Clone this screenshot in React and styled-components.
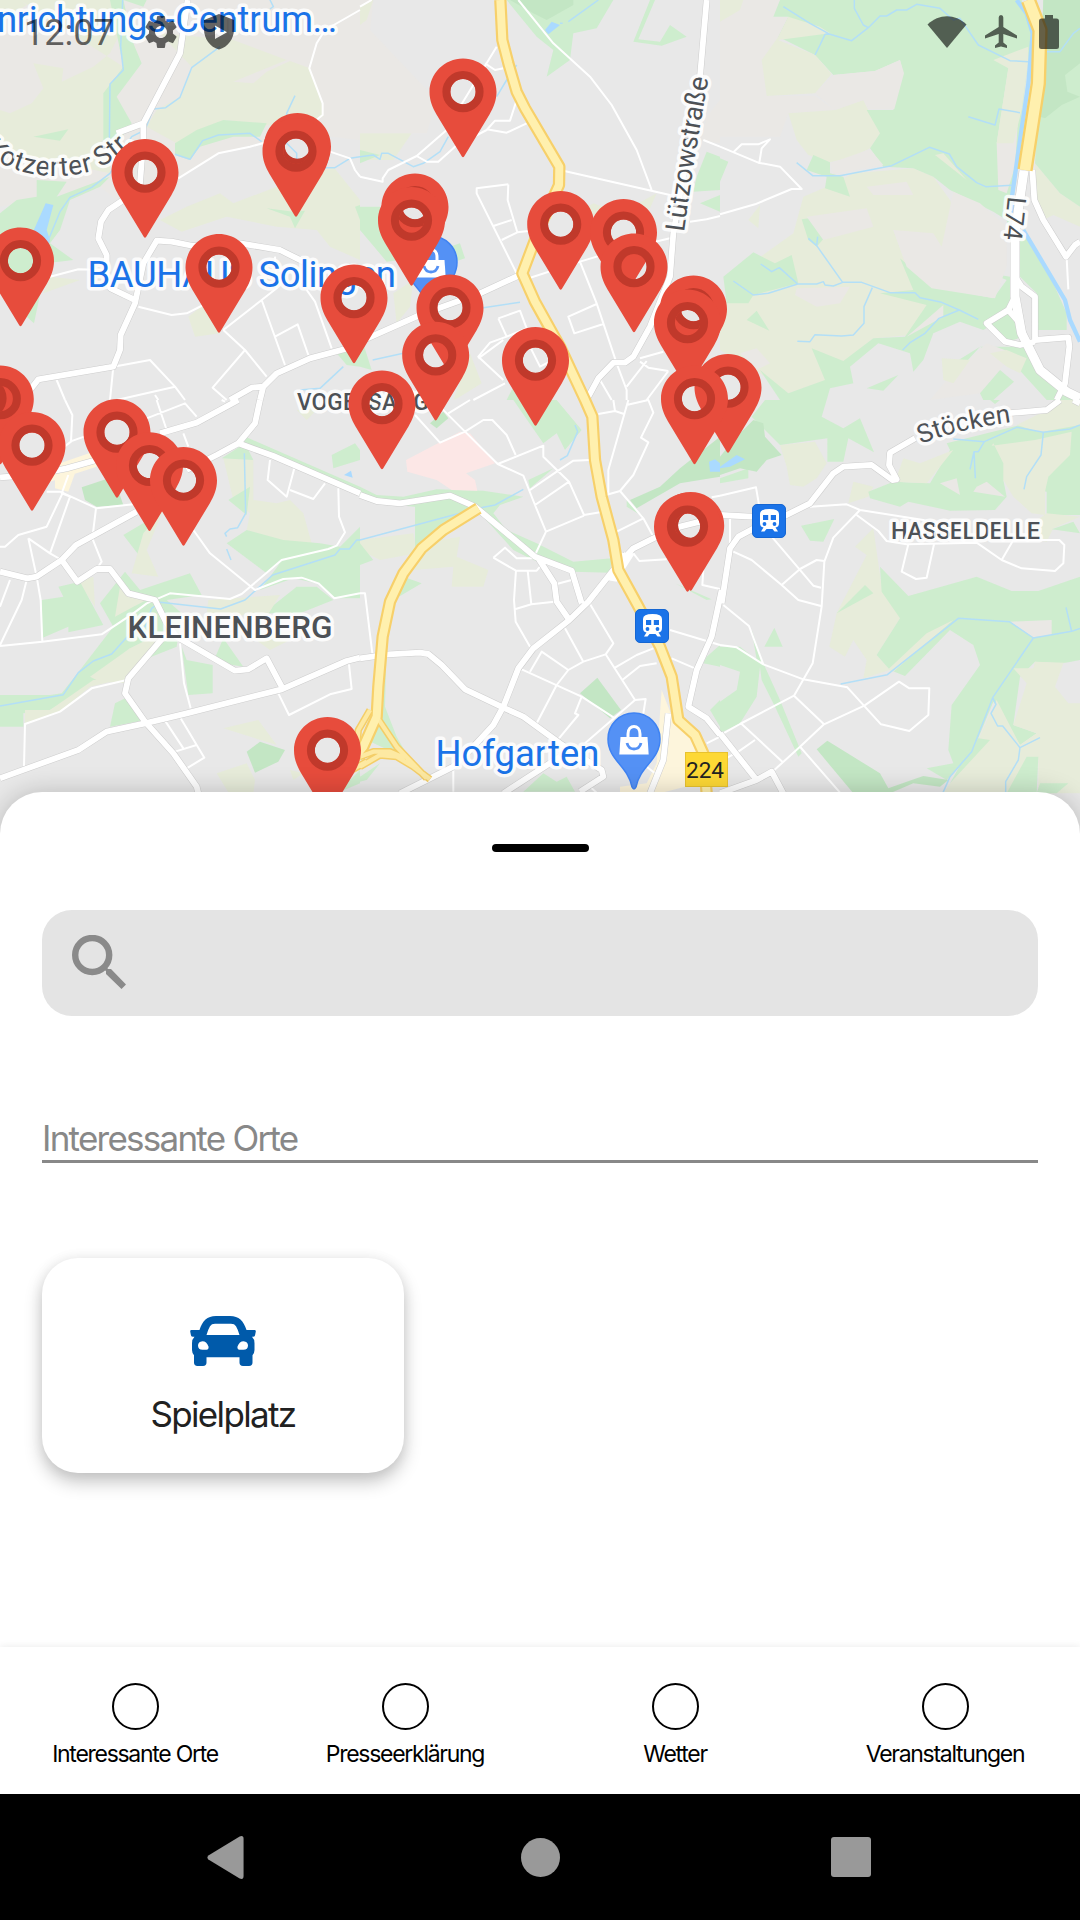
import React from "react";
import styled, { createGlobalStyle } from "styled-components";

const GlobalStyle = createGlobalStyle`
  body { margin: 0; background: #fff; }
  * { box-sizing: border-box; }
`;

const Screen = styled.main`
  width: 1080px;
  height: 1920px;
  display: flex;
  flex-direction: column;
  overflow: hidden;
  font-family: Inter, "Liberation Sans", sans-serif;
  background: #fff;
`;

const MapArea = styled.section`
  position: relative;
  flex: none;
  height: 836px;
  background: #e8e8e8;
`;

const MapCanvas = styled.svg`
  display: block;
`;

const StatusBar = styled.header`
  position: absolute;
  top: 0;
  left: 0;
  right: 0;
  height: 63px;
  padding: 0 21px 0 24px;
  display: flex;
  justify-content: space-between;
  align-items: center;
  color: rgba(0, 0, 0, 0.6);
  font: 400 36px/63px Roboto, sans-serif;
`;

const StatusGroup = styled.div`
  display: flex;
  align-items: center;
  gap: ${(p) => p.$gap}px;
`;

const Clock = styled.span`
  width: 92px;
  margin-right: 25px;
  padding-top: 4px;
`;

const Sheet = styled.section`
  position: relative;
  flex: none;
  margin-top: -44px;
  height: 855px;
  padding: 52px 42px 0;
  display: flex;
  flex-direction: column;
  background: #fff;
  border-radius: 42px 42px 0 0;
  box-shadow: 0 0 26px rgba(0, 0, 0, 0.2);
`;

const Handle = styled.div`
  flex: none;
  align-self: center;
  width: 97px;
  height: 8px;
  border-radius: 4px;
  background: #000;
`;

const SearchField = styled.div`
  flex: none;
  margin-top: 58px;
  height: 106px;
  padding: 25px 30px;
  display: flex;
  align-items: flex-start;
  border-radius: 30px;
  background: #e4e4e4;
`;

const SectionTitle = styled.h2`
  flex: none;
  margin: 98px 0 0;
  height: 49px;
  border-bottom: 3px solid #888;
  color: #888;
  font-size: 35px;
  font-weight: 400;
  line-height: 48px;
  letter-spacing: -1.75px;
`;

const Card = styled.article`
  flex: none;
  margin-top: 95px;
  width: 362px;
  height: 215px;
  padding-top: 58px;
  display: flex;
  flex-direction: column;
  align-items: center;
  gap: 26px;
  border-radius: 36px;
  background: #fff;
  box-shadow: 0 9px 18px rgba(0, 0, 0, 0.23), 0 0 14px rgba(0, 0, 0, 0.06);
`;

const CardLabel = styled.span`
  color: #212121;
  font-size: 35px;
  line-height: 44px;
  letter-spacing: -1.65px;
`;

const TabBar = styled.nav`
  position: relative;
  flex: none;
  height: 147px;
  display: grid;
  grid-template-columns: repeat(4, 1fr);
  background: #fff;
  box-shadow: 0 -1px 7px rgba(0, 0, 0, 0.07);
`;

const Tab = styled.div`
  padding-top: 36px;
  display: flex;
  flex-direction: column;
  align-items: center;
  gap: 9px;
`;

const TabCircle = styled.span`
  width: 47px;
  height: 47px;
  border: 2.6px solid #000;
  border-radius: 50%;
`;

const TabLabel = styled.span`
  color: #000;
  font-size: 23px;
  line-height: 30px;
  letter-spacing: -1.28px;
  white-space: nowrap;
`;

const SystemBar = styled.footer`
  flex: 1;
  padding: 0 209px 0 207px;
  display: flex;
  justify-content: space-between;
  align-items: center;
  background: #000;
`;

const SystemShape = styled.svg`
  display: block;
  fill: #999;
  margin-left: ${(p) => p.$nudge || 0}px;
`;

/* Each sector covers 360x400 px and is drawn in a 1080x1200 grid. */
const sectors = [
  {
    x: 0,
    y: 0,
    beige: "M0 0H1080V420L900 400L655 460L535 535L400 640L300 560L0 620Z",
    farm: "M0 0H60L80 15L0 65Z M60 0H360L355 110L330 160L280 200L185 245L190 205L100 190L130 265L95 310L30 340L0 330V450L330 520L330 250L370 200Z M480 100L700 120L860 180L700 245L760 250L800 215L870 183L930 205L965 310L970 350L840 380L680 360L530 430L440 380L470 330L540 290L575 200Z M545 695L480 660L560 620L660 580L700 610L830 560L1000 500L1080 600V780L990 740L950 690L830 680L680 650Z M565 950L610 915L660 1000L585 1010Z M150 830L240 840L130 880Z",
    green: "M330 0H440L430 20L370 0L400 130L425 190L350 290L395 370L345 440L310 420V280L340 240L370 200Z M100 410L205 388L180 422Z M525 430L590 390L670 360L800 370L780 410L700 410L600 440L570 480L525 465Z M0 640L50 600L110 590L110 540L200 545L170 590L330 530L300 560L210 600L180 690L150 730L220 780L140 790L102 970L0 880Z M800 625L880 635L915 632L885 685L870 650Z M1065 620L1080 615V660Z M1010 1060L1080 1030V1100L1040 1095Z",
    water: "M137 610L160 615L140 690L150 720L120 830L95 750L75 750Z",
    streams: "M368 0L362 140L370 210L330 252L328 430M810 0L820 20L810 27M660 140L575 203L540 292L497 323L460 327L435 390L395 410L330 520L275 562L210 592L180 635L145 720M525 463L570 478L608 422L655 405L750 400L785 425M885 287L860 340V430L890 460V475L970 503H1005L1050 475L1080 470M1030 1100L960 1165L900 1170",
    minor: "M1080 30L975 90L950 130L928 205L968 310V345L900 400L750 440L655 460L535 535M990 455L1050 475L1065 510L1080 530M150 830L235 808L320 810M415 920L515 945L560 940L610 915M670 990L785 900L830 865L825 770M785 900L855 1095M920 870L945 905L995 1045M670 990L735 1050L800 1130M825 1010L893 973L925 1065M735 1050L638 1163L680 1200M340 1100L450 1080L525 1160L350 1200M340 1100L330 1200M465 1185L475 1200M525 1160L555 1200M170 1140L195 1200",
    mid: "M563 0L540 160L430 370L350 400M430 370V420L420 550L370 600L325 630L303 665L295 715L320 765V840L332 865L405 900M910 785L840 750L720 730L580 738L515 725L470 722L430 790L405 910L362 1005L360 1050L340 1100L115 1138L90 1170M1080 1035L930 1075L830 1120L790 1160L755 1163L690 1200M790 1160L780 1200",
  },
  {
    x: 360,
    y: 0,
    beige: "M0 0H40L30 90L230 300L200 400H0Z M1040 350L1080 300V430L1020 420Z",
    farm: "M0 20L40 0L20 60L0 75Z M0 400L155 400L100 480L0 480Z M780 640L890 580L870 625L820 660L650 640L700 610Z M100 880L160 840L150 920L110 970Z M280 1200L330 1060L365 1150L300 1190Z",
    green: "M440 0H760L710 85L640 100L630 180L560 230L580 150L530 110Z M870 0L820 125L905 137L980 110L930 75L900 125L835 118L885 0Z M1010 530L1040 455L1080 470V570L1000 575Z M1020 610L1080 585V635Z M0 450L60 465L0 490Z M0 620L60 620L120 780L80 785L0 690Z M240 750L300 730L315 775L240 800Z M0 1000L35 1110L0 1100Z M440 1200L460 1160L520 1200Z",
    dark: "M450 0H640V15L560 60L520 40Z",
    water: "M555 90L575 65L600 75L565 103Z",
    streams: "M0 470L40 465L60 478L65 460H85L160 500L190 490L240 455L265 410M470 195L440 240L410 290M600 70H608M625 65L715 0M370 923L480 907M38 1080L130 1060",
    minor: "M0 20L35 0M475 0L580 130L690 230L755 315L830 450L875 570M600 510L930 585M375 190L405 210L430 205M0 530L68 545V535L85 510L170 468L260 390L300 320L410 140M170 468L200 485H235L285 440L380 390L405 362H450L470 300M380 388L440 398L500 370M445 553L443 600L472 697L505 693M445 553L350 565V580L470 820M400 678L455 660M425 720L472 697M490 840L660 785L760 755L930 715M660 785L710 910L730 970L770 1090L800 1170V1200M730 972L643 1000L625 950L710 912M415 955L480 932L500 985L440 1010L390 1028L355 1070L430 1140M415 955L440 1010M355 1075L430 1020M510 1040L540 1100L580 1080M435 1150L340 1200M990 665L1040 658L1080 648M1030 420L1080 440M840 1075L910 1055M840 1085L865 1103L925 1113M860 1083L800 1160M925 1113L860 1200M720 1140L755 1200",
    mid: "M1040 0L1020 230L940 700L930 830L870 980L820 1070L795 1088H760L715 1135L685 1190M0 1025L180 945L360 880L480 825",
  },
  {
    x: 720,
    y: 0,
    beige: "M0 0H180L160 50L205 50L175 110L125 180L140 288H285L345 330L205 340L180 410H0Z",
    farm: "M205 340L345 330L430 300L480 400L450 445L400 470L330 487L265 465L230 420Z M320 560L400 520L580 505L640 530L690 600L715 660L665 740L600 720L520 690L560 800L640 870L820 895L620 960L570 1005L460 1015L370 1085L280 1050L320 1140L205 1180L120 1120L0 1050V900L85 910L80 800L220 700L250 590Z M945 490L1020 580L1080 620V680L1000 645L970 660L945 590Z M120 615L115 685L85 660Z M0 0H70L60 30L0 65Z",
    green: "M180 0H905L935 100L925 180L905 340L890 500L875 560L870 700L860 660L820 635L690 570L640 530L580 505L490 500L450 445L480 400L440 330H520L550 220L540 180L465 213L340 225L285 165L175 110L205 50L160 50Z M0 475L25 485L0 545Z M280 465L330 487V520L370 530L390 590L315 565L320 530L260 510Z M245 658L315 648L325 700L290 740L265 720Z M10 830L100 757L165 790L215 765L235 850L100 885L85 910L20 910Z M80 960L110 932L148 992Z M540 775L640 860L820 895L860 840L810 820L870 830L880 900L840 960L790 990L720 965L640 1000L610 1080L580 1115L570 1060L475 1030L390 1100L400 1150L330 1165L320 1200H180L120 1110L205 1180L315 1140L275 1045L370 1083L460 1015L555 1010L620 915L480 880L580 870Z M880 730L910 690L1000 850L1040 940V990L950 990L950 880L900 830Z M800 970L870 900L910 1010L850 1030Z M680 1150L780 1040L920 1040L960 1130L1080 1200H980L880 1090L780 1040L700 1090Z M970 0H1080V620L1020 580L945 490Z",
    overBeige: "M340 225L465 213L540 180L552 220L523 327H445L430 300L345 330L285 280Z M330 490L450 448L490 495L340 522Z M440 560L560 545L580 585H460Z M520 690L640 700L665 740L700 575L780 610L860 680V800L825 895L635 865L560 800Z M260 650L440 625L460 680L310 720Z M230 865L390 860L360 910L290 920L225 885Z M865 205L905 190L885 500L860 580L835 570L830 430Z M630 1200L680 1140L800 1030L880 1060L780 1180Z M60 1060L110 1045L150 1090L110 1110Z M670 915V950L560 1010Z",
    overFarm: "M205 50L300 80L330 100L175 120L285 165L335 222L285 280L140 288L125 180L175 110Z M820 180L925 140V180L905 330L880 430L830 430L865 205Z M645 465L670 460L740 540Z M665 1075L750 1080L700 1150L670 1140Z M810 1060L860 1050L920 1075L900 1120L860 1100Z",
    overGreen: "M780 1180L840 1110L882 1145L820 1200H790Z M440 1165L535 1125L490 1172Z",
    dark: "M970 0H1080V190L1035 225L1042 275L1080 290L1025 315L975 355L960 350Z",
    river: "M890 0L920 40L938 100L925 250L900 420L876 590M880 600V640M910 690L1035 900L1050 960L1080 1025",
    streams: "M190 20L270 70L330 103L395 122L445 83L480 48H500L530 30H560L590 13L660 25L700 60L720 55L775 135L870 182L925 185M403 0V25L430 75L445 83M330 103H315L300 135L285 165M745 350L825 375L837 327L900 338M230 488L278 527H360L515 497L628 442L688 462L710 500L770 548L797 560L875 556M265 715L290 737L368 847L340 858L315 855L310 845L290 852H233L178 803L155 815L122 792M290 737L293 710M40 843L100 885L145 880L233 852M368 847H425L510 878H585L600 893L665 907L718 930L775 958M718 930L657 955L615 1000L570 1028L548 1050M457 863L432 920V970L400 1005L365 1008L285 1004L270 1025L232 1024M1080 85L1060 100L1020 155H980",
    minor: "M0 440L115 488L180 500L245 567H215L105 613L0 643M40 457L65 433H115L150 418L125 445L118 488M1040 775L1045 868",
    mid: "M937 510L943 600L970 660L1038 770L1065 735L1080 725M885 830L905 860L945 890V1020L1045 1012L1048 1040L1035 1150L1010 1200M885 890L865 930L800 970L855 1025L900 1035L945 1025M865 930L900 970L915 1020",
    wide: "M912 512L885 700V890L905 1000L960 1110L1040 1175L1080 1195",
  },
  {
    x: 0,
    y: 400,
    farm: "M235 545L280 530L285 620Z M670 175L760 180V300L830 310L870 300L910 340L935 430L850 425L740 390L750 340L700 300Z M670 985L775 960L830 1035Z M650 1120L740 1090L765 1140L760 1180L690 1185Z M870 1110L910 1120L880 1140Z M740 700L930 690L810 750Z M890 30L960 20L920 60Z",
    green: "M0 885L150 885L185 880L240 810L340 680L300 610L375 515L420 570L570 520L605 585L500 600L545 640L530 740L430 780L390 745L300 840L150 930L70 940V980L0 980Z M125 600L190 590L175 560L240 545L310 675L205 697V680L125 715Z M370 405L455 355L420 470Z M690 300L740 390L850 420L960 430L1020 440L1080 380V595L1000 595L950 550L880 535L780 570L840 490L800 520L680 430L740 390Z M685 300L750 260L740 345Z M720 130L740 112L1080 260V285L830 165Z M665 175L735 130L760 180Z M995 165L1065 130L1080 150V180L1000 205Z M790 640L890 560L950 560L1000 600L900 640Z M560 780L638 795V880L565 885L545 740Z M670 715L730 800L640 785Z M345 910L385 890L440 960L330 980Z M1010 1180L1080 1150V1110Z",
    overFarm: "M270 830L390 745L500 690L440 780L380 850L300 845Z M345 650L360 560L440 600L400 620Z M75 930L150 930L280 840L375 835L270 860L180 935L75 970Z M625 600L840 585L800 650L620 640Z M430 400L490 330L440 450L475 530L395 520Z",
    dark: "M245 262L340 230L370 315L290 320L255 300Z M740 1055L780 1025L855 1050L835 1085L765 1118Z",
    commerce: "M165 235L225 220L205 275L165 265Z M150 200L280 155L290 200L150 245Z",
    water: "M1032 225L1053 212L1058 233Z",
    streams: "M733 160L737 340L713 383L690 387L675 400L680 410M680 447L693 480M1080 420H1070L1048 447H1020L1005 465L818 525L735 600L662 627L480 607L455 625L435 680L400 690L335 762L280 783L235 818L190 884L0 918",
    minor: "M195 0L217 45L213 125L180 150M210 125L280 100M140 275H180L290 325L400 313M288 325L277 415L305 485L290 507M190 275L140 380L55 405L15 440H0M205 225L185 280L210 290L150 460L185 480M85 415L150 460M85 415L110 530L122 600L127 725M0 738L127 725L305 703L400 640L440 610L510 580L690 597L725 582L845 480L985 447L1010 437L1035 397L1017 350L1015 265M580 390L630 460L765 570L850 537L905 533L955 550L1003 595L1080 580M470 0L500 90M440 55L555 10L590 50M550 100L565 140M810 180L803 240L860 290L883 205M870 270L940 297L975 250M30 540L0 620M80 540L65 600L0 735M380 840L275 865L180 935L75 972L72 1100M540 730L552 850L572 925M835 880L867 945L990 883L1055 867L1047 793M497 965L550 1045M542 955L613 1073L560 1105M525 1055L590 1035M665 0L675 5",
    mid: "M0 232L100 225L200 205L290 180M480 100L590 68L715 0M780 0L765 70L715 130L650 165L560 210M410 335L228 435L185 480L110 530L82 535L0 515M185 480L232 545L290 507H330L385 580L465 600L500 670L530 710L705 812L745 808L800 775L845 860M715 130L820 168L1080 280M500 700L385 835L375 880L435 965L520 1060L590 1160L595 1180M0 1135L235 1050L320 995L435 970L560 940L845 868L1040 783L1080 773",
  },
  {
    x: 360,
    y: 400,
    farm: "M0 420L160 400L170 460L60 480L0 450Z M180 430L300 410L290 470L385 510L370 560L275 560L280 500L160 510Z",
    green: "M0 260L50 285L130 290L230 268L370 272L490 290L420 315L400 340L440 390L530 430L640 485L755 475L750 518L640 515L520 480L460 450L360 340L310 370L220 430L165 440L165 320L50 310L0 290Z M0 430L40 480L0 495Z M60 760L100 600L130 530L185 550L100 600L80 720L75 920L110 1010L150 1080L20 1020L50 950Z M460 0H590L665 90L615 150L590 100L550 130Z M505 240L580 205L510 265Z M490 1175L550 1120L590 1145L620 1130L645 1175Z M1040 770L1080 735V800L1030 790Z M1050 930L1080 900V980Z M0 1130L60 1090L20 1140L0 1145Z M945 550L1055 598L1040 600Z M800 300L850 350L800 320Z",
    dark: "M210 70L250 35L265 55L230 85Z M810 300L900 260L960 205L1080 110V230L960 250L830 325Z M660 880L712 833L783 930L750 955Z",
    pink: "M138 180L300 95L330 100L405 190L318 220L345 240L352 272L275 270L230 240L142 215Z",
    commerce: "M905 870L940 960L1000 1010L1010 1060H975V1160L900 1180H780V1160L860 1150L890 1090L900 940Z",
    water: "M1047 185L1065 178L1080 190V215H1050Z",
    streams: "M645 75L653 95L622 167L600 180M490 268L405 315L370 322L280 345L0 420",
    minor: "M165 45L240 128L315 95L370 60H397L440 105L467 165M413 192L550 137V170L627 245L672 345L720 337M240 20L315 95L413 192L490 227L525 315L558 395L525 465M510 270L590 215L640 182L690 180M525 315L627 245M558 395L672 347M265 40L330 0M715 42L765 33L792 42M805 0L745 210V285M760 0L765 33M720 290L780 273L820 225L865 127L843 113L880 38L865 0L800 15M780 273L850 355L880 410M850 355L770 395M820 460L838 483L920 478M400 473L435 443L470 475H530M400 473L468 512H530L540 500M468 510L462 600L467 665L510 740M503 512L514 613L583 605M467 627L514 613M590 552L635 540M690 612L760 730L737 763L670 785L615 685M670 785L625 810L545 755L510 815M485 808L665 890L765 955M625 810L590 855L530 970M665 890L645 940L655 945L597 1015M737 763L825 900L675 1030M765 803L830 765L880 745M787 840L840 798L890 790M825 900L857 897L850 940M930 690L1080 735M935 775L1005 805M1030 510L1027 555L1080 567M1055 292L1080 287M0 580H15L37 760M280 1110V1175M690 1160L710 1178M860 1100L885 1120M1040 1030L1080 1010",
    mid: "M0 285L50 303L120 310L270 287L345 320L525 470L635 512L665 610M535 475L583 550L590 605L628 660M1080 350L960 380L880 415L820 445L760 510L685 605L628 660L520 745L475 805L430 920L400 975L340 1040L280 1100L120 1180M0 775L85 763L180 758L205 762L245 795L315 868L430 923L490 950L600 1030L725 1110L730 1130L660 1175M430 1180L600 1070M1085 570L1055 710L1010 810L985 920L1040 955L1080 1005M925 940L910 1080L870 1180M800 460L760 530",
  },
  {
    x: 720,
    y: 400,
    farm: "M180 135L285 125L320 190L290 235L250 260L210 255L200 200Z M400 245L460 260L445 290L385 310Z M405 440L460 385L485 560L540 655L470 765L510 810L430 835L440 780L400 720L375 770L328 740L350 640L440 465Z",
    green: "M95 50L135 0H320L305 50L370 85L420 55L462 157L385 115L370 185H322V115L180 135Z M0 235L85 205V235L0 250Z M445 275L520 245L630 250L690 150L680 130L900 75L1080 30V345H980L980 275L850 240L860 290L825 330L690 332L565 305L540 320L450 295Z M243 377L343 357L310 425L270 422Z M480 500L565 588L770 530L875 573H955L1080 530V790L1020 790L945 785L900 830L880 975L950 1000L900 1035L820 905L760 1050L680 1140L620 1105L700 1090L685 1050L695 915L780 795L760 735L690 690L555 828L510 810L470 765L540 655L485 575Z M0 740L60 740L110 780L95 690L130 790L180 900L245 1060L235 1070L165 920L125 840L120 800L110 890L60 970L0 1000Z M163 683L188 740H133Z M385 605L435 555L460 580L350 640Z M810 0L825 12L840 0Z",
    overFarm: "M550 175L600 190L700 150L620 250L525 245Z M890 75L1000 20L1020 0H1080V75L960 97Z M815 137L945 120L1055 95L1050 165L985 230L975 275V345L935 340L880 290L850 240L850 190L820 130Z M940 370L980 340L1080 350L1000 385L980 425L930 415Z M880 805H940L945 785L1080 790V1180H955V1075L920 1070L880 1180H670L760 1050L830 900L900 1035L950 1000L880 975L920 850Z M505 808L620 700L700 660L520 815Z",
    overBeige: "M660 250L710 235L720 285Z M770 260L800 245L855 290L760 275Z M870 665L995 660V705L940 712Z M1025 940L1080 970V1060Z",
    overUrban: "M1080 780V910L1045 910L1005 860L1030 790Z M0 795L60 815L50 870L0 905Z",
    overGreen: "M860 1180L920 1070H955L950 1180Z M960 1150H1045L1010 1180H950Z M740 1060L775 1015L810 1020L690 1150Z M995 388L1060 365L1080 400Z",
    dark: "M0 170L40 120L100 60L130 70L135 110L185 165L140 180L110 215L60 205L0 225Z M290 1048L322 1022L480 1120L505 1165L575 1140L610 1128L685 1140L660 1160L580 1150L510 1180H400Z",
    water: "M0 200L50 165L75 178L30 200L0 205Z",
    streams: "M700 117L793 125L890 82L970 97L1050 87L1080 75M970 97L963 165L920 230L912 268M793 125L775 155H762L750 208M762 155L766 235M362 852L502 824L715 655L868 665L940 714L1055 694L1038 622M1055 694L1080 685M940 714L818 893L755 1055L690 1130L668 1180M818 893L828 913L813 940L833 978H848L900 1043L895 1080L857 1145V1180M900 1043L960 1013",
    minor: "M0 287L108 262L118 320M30 350V430M270 320L380 313L420 330L610 360L700 400M420 330L340 413L313 485L305 620L278 790L222 887L60 972L10 1000M410 345L475 393L500 423L560 433L770 428L845 480L905 505L1005 513L1030 490L1033 435L1018 420H880L845 480M565 433L545 515L588 537L620 533L642 433M155 410L280 557L303 563M40 455L95 480L185 555L235 600L303 618M185 555L240 507L290 480L313 483M10 615L87 678L130 793M0 735L50 742L130 793L250 838L382 862L483 973L568 993L625 945L628 865H568L537 845L433 917L312 973L222 887M312 973L240 1040L163 1110M65 972L187 1085M105 1020L55 1055L0 1085M240 1040L360 1178",
    mid: "M1020 0L980 30L860 40M585 115L510 158L507 195L530 238L517 240L455 195L370 200L340 220L270 310L190 350L95 350L0 345M130 370L55 410L30 445L5 610M1060 0L1080 10M0 1000L110 1140L155 1115L190 1180M110 1140L0 1180",
  },
];

const highways =
  "M1501 0L1507 120L1525 190L1550 275L1575 325L1678 500L1677 555L1620 680L1567 820L1605 905L1680 1040L1755 1200L1777 1250L1785 1380L1805 1490L1840 1620L1855 1710L1910 1810L1980 1940L2015 2030L2035 2160L2085 2205L2110 2260L2120 2380 M1435 1525L1330 1590L1265 1645L1210 1720L1170 1805L1148 1910L1135 2060L1130 2150L1090 2240L1040 2300";
const ramps =
  "M1130 2150L1190 2240L1280 2335 M1080 2300L1140 2265L1190 2270L1240 2300L1290 2338 M1080 2270L1120 2255H1170L1215 2275 M1110 2130L1075 2190L1070 2250 M1100 2285L1000 2340L960 2376 M1080 2260L1000 2330L950 2378";
const eastHighway = "M3085 0L3120 90L3115 250L3075 510";

const fills = [
  ["beige", "#eae8e5"],
  ["farm", "#e7ecda"],
  ["green", "#ceedce"],
  ["overBeige", "#eae8e5"],
  ["overFarm", "#e7ecda"],
  ["overUrban", "#e8e8e8"],
  ["overGreen", "#ceedce"],
  ["dark", "#c3e6c4"],
  ["pink", "#fce7e6"],
  ["commerce", "#fdf5dc"],
  ["water", "#aadaff"],
];

const strokes = [
  ["streams", "#b3dff7", 4.5],
  ["river", "#aadaff", 13],
  ["minor", "#fff", 6],
  ["mid", "#cdcdcd", 20.5],
  ["wide", "#cdcdcd", 30],
  ["mid", "#fff", 17.5],
  ["wide", "#fff", 27],
];

const pins = [
  [297.5, 113], [296, 118], [145, 139], [20.5, 227.5], [219, 234], [354, 264.5],
  [463, 58.5], [415, 173.5], [411.5, 187], [560.7, 191], [623.5, 199], [634, 233.5],
  [450, 274.5], [435.7, 321.7], [535.5, 327], [693.5, 275.5], [687.5, 289.5],
  [382, 370.5], [728, 354], [694.5, 365.5], [-14, 365], [0.3, 365.5], [32, 412],
  [117, 399], [149.5, 432.3], [183.5, 447], [327.5, 717], [690.7, 492], [687.5, 493],
];

const sectorTransform = (s) => `translate(${s.x} ${s.y}) scale(${1 / 3})`;

const Pin = ({ x, y }) => (
  <g transform={`translate(${x - 33.5} ${y})`}>
    <path
      fill="#e74c3c"
      fillRule="evenodd"
      d="M33.5 0C52 0 67 15 67 33.5C67 42 64 49 60 56L34.6 98Q33.5 99.5 32.4 98L7 56C3 49 0 42 0 33.5C0 15 15 0 33.5 0ZM33.5 20.5A12.7 12.7 0 1 0 33.5 45.9A12.7 12.7 0 1 0 33.5 20.5Z"
    />
    <circle cx="33.5" cy="33.2" r="16.6" fill="none" stroke="#c0392b" strokeWidth="8" />
  </g>
);

const ShopPin = ({ x, y }) => (
  <g transform={`translate(${x} ${y})`}>
    <path
      d="M0 -26C14.400 -26 26 -14.400 26 0C26 21 6 27 2 48Q0 52 -2 48C-6 27 -26 21 -26 0C-26 -14.400 -14.400 -26 0 -26Z"
      fill="#5491f5"
      stroke="#3f83f3"
      strokeWidth="1.5"
    />
    <path d="M-13.500 -2H13.500L14.700 15.500H-14.700Z" fill="#fff" />
    <path d="M-6 -1V-5C-6 -15 6 -15 6 -5V-1" fill="none" stroke="#fff" strokeWidth="3" />
    <path d="M-7 4C-5 12 5 12 7 4" fill="none" stroke="#5491f5" strokeWidth="2.800" />
  </g>
);

const Station = ({ x, y }) => (
  <g transform={`translate(${x} ${y})`}>
    <rect x="0.500" y="0.500" width="33" height="33" rx="4.500" fill="#1a73e8" stroke="#1566d2" />
    <path d="M8 10Q8 5 17.500 5Q27 5 27 10V19Q27 23 23.500 23.500L26 27.500H22.500L20.500 25H14.500L12.500 27.500H9L11.500 23.500Q8 23 8 19Z" fill="#fff" />
    <path d="M11 11H16.200V16H11ZM18.800 11H24V16H18.800Z" fill="#1a73e8" />
    <circle cx="12.500" cy="20" r="1.900" fill="#1a73e8" />
    <circle cx="22.500" cy="20" r="1.900" fill="#1a73e8" />
  </g>
);

const MapLabel = styled.text`
  font-family: Roboto, sans-serif;
  font-size: ${(p) => p.$size}px;
  font-weight: ${(p) => p.$weight || 400};
  fill: ${(p) => p.$color || "#4d5156"};
  stroke: rgba(255, 255, 255, 0.85);
  stroke-width: ${(p) => p.$halo ?? 7}px;
  stroke-linejoin: round;
  paint-order: stroke;
`;

function CityMap() {
  return (
    <MapCanvas width="1080" height="836" viewBox="0 0 1080 836">
      <defs>
        <path id="kotzerter" d="M-15 150Q-5 163 20 171Q55 181 92 171Q118 161 144 131" />
        <path id="stoecken" d="M921 444Q955 430 1012 422" />
        <path id="luetzow" d="M684 232Q694 158 709 76" />
      </defs>
      {fills.map(([layer, color]) =>
        sectors.map((s) =>
          s[layer] ? (
            <path key={layer + s.x + s.y} d={s[layer]} fill={color} transform={sectorTransform(s)} />
          ) : null
        )
      )}
      {strokes.map(([layer, color, width]) =>
        sectors.map((s) =>
          s[layer] ? (
            <path
              key={layer + width + s.x + s.y}
              d={s[layer]}
              fill="none"
              stroke={color}
              strokeWidth={width}
              strokeLinejoin="round"
              transform={sectorTransform(s)}
            />
          ) : null
        )
      )}
      <g transform={`scale(${1 / 3})`} fill="none" strokeLinejoin="round">
        <path d="M1858 1658L1905 1660L1850 1745L1820 1740Z" fill="#fff" />
        <path d={ramps} stroke="#f4ce68" strokeWidth="22" />
        <path d={highways} stroke="#f7d06a" strokeWidth="37" />
        <path d={eastHighway} stroke="#f7d06a" strokeWidth="46" />
        <path d={ramps} stroke="#fde9a2" strokeWidth="13" />
        <path d={highways} stroke="#fff0ae" strokeWidth="24" />
        <path d={eastHighway} stroke="#fff0ae" strokeWidth="32" />
      </g>

      <MapLabel $size={36.5} $color="#1a73e8" x="-3" y="32" textLength="340">nrichtungs-Centrum…</MapLabel>
      <MapLabel $size={36.5} $color="#1a73e8" x="87.500" y="287" textLength="308.500">BAUHAUS Solingen</MapLabel>
      <MapLabel $size={36.5} $color="#1a73e8" x="435.500" y="766" textLength="164">Hofgarten</MapLabel>
      <MapLabel $size={23} $weight={500} x="297" y="409.5" textLength="132">VOGELSANG</MapLabel>
      <MapLabel $size={31.5} $weight={500} x="127.500" y="637.500" textLength="205">KLEINENBERG</MapLabel>
      <MapLabel $size={23.5} $weight={500} x="891" y="538.500" textLength="149">HASSELDELLE</MapLabel>
      <MapLabel $size={27}>
        <textPath href="#kotzerter" textLength="165">Kotzerter Str.</textPath>
      </MapLabel>
      <MapLabel $size={26}>
        <textPath href="#stoecken">Stöcken</textPath>
      </MapLabel>
      <MapLabel $size={27}>
        <textPath href="#luetzow" textLength="156">Lützowstraße</textPath>
      </MapLabel>
      <MapLabel $size={26} transform="translate(1008 196) rotate(96)">L74</MapLabel>

      <ShopPin x={431} y={262} />
      <ShopPin x={634} y={739} />
      <Station x={635} y={609} />
      <Station x={752} y={504} />
      <rect x="685.500" y="752.500" width="42" height="34" fill="#fdd835" stroke="#e8c22f" />
      <MapLabel $size={22.5} $color="#222" $halo={0} x="686" y="778">224</MapLabel>
      {pins.map(([x, y]) => (
        <Pin key={`${x}-${y}`} x={x} y={y} />
      ))}
    </MapCanvas>
  );
}

const GearIcon = () => (
  <svg width="40" height="40" viewBox="0 0 24 24" fill="currentColor">
    <path d="M19.140 12.940c.04-.3.06-.61.06-.94 0-.32-.02-.64-.07-.94l2.030-1.580c.18-.14.23-.41.12-.61l-1.920-3.320c-.12-.22-.37-.29-.59-.22l-2.390.96c-.5-.38-1.030-.7-1.620-.94l-.36-2.540c-.04-.24-.24-.41-.48-.41h-3.840c-.24 0-.43.17-.47.41l-.36 2.540c-.59.24-1.130.57-1.620.94l-2.390-.96c-.22-.08-.47 0-.59.22L2.740 8.870c-.12.21-.08.47.12.61l2.030 1.580c-.05.3-.09.63-.09.94s.02.64.07.94l-2.030 1.580c-.18.14-.23.41-.12.61l1.920 3.320c.12.22.37.29.59.22l2.390-.96c.5.38 1.030.7 1.620.94l.36 2.540c.05.24.24.41.48.41h3.840c.24 0 .44-.17.47-.41l.36-2.540c.59-.24 1.130-.56 1.620-.94l2.390.96c.22.08.47 0 .59-.22l1.920-3.320c.12-.22.07-.47-.12-.61l-2.010-1.580zM12 15.600c-1.980 0-3.600-1.620-3.600-3.600s1.620-3.600 3.600-3.600 3.600 1.620 3.600 3.600-1.620 3.600-3.600 3.600z" />
  </svg>
);

const ShieldIcon = () => (
  <svg width="30" height="36" viewBox="0 0 30 36" fill="currentColor" fillRule="evenodd">
    <path d="M15 0L30 6V15C30 25 24 33 15 35.500C6 33 0 25 0 15V6ZM11 11.500V25L23 18.200Z" />
  </svg>
);

const WifiIcon = () => (
  <svg width="40" height="34" viewBox="0 0 40 34" fill="currentColor">
    <path d="M0.500 9.500C12 -1.500 28 -1.500 39.500 9.500L20 33Z" />
  </svg>
);

const PlaneIcon = () => (
  <svg width="32" height="34" viewBox="0 0 32 34" fill="currentColor">
    <path d="M16 0Q18.300 0 18.300 2.500V12L32 20.500V23.500L18.300 19V27.500L22 30.500V33L16 31.500L10 33V30.500L13.700 27.500V19L0 23.500V20.500L13.700 12V2.500Q13.700 0 16 0Z" />
  </svg>
);

const BatteryIcon = () => (
  <svg width="24" height="34" viewBox="-4 0 24 34" fill="currentColor">
    <path d="M6 0H14V3.500H17.500Q20 3.500 20 6V31.500Q20 34 17.500 34H2.500Q0 34 0 31.500V6Q0 3.500 2.500 3.500H6Z" />
  </svg>
);

const SearchIcon = () => (
  <svg width="54" height="54" viewBox="0 0 54 54">
    <circle cx="20.200" cy="20" r="17" fill="none" stroke="#8a8a8a" strokeWidth="6.400" />
    <path d="M31 34L34 31L36 34H39L54 49.500L49.500 54L34 39V36Z" fill="#8a8a8a" />
  </svg>
);

const CarIcon = () => (
  <svg width="66" height="50" viewBox="0 0 66 51.500" preserveAspectRatio="none" fill="#005aaa" fillRule="evenodd">
    <path d="M26 0H40C49 0 53.500 5 56.500 14.500H64.500Q66 14.500 65.800 16L65 20Q64.600 21.500 63 21.500H62Q64.500 24 64.500 28V35Q64.500 38 62.500 40.500V48Q62.500 51.500 59 51.500H53Q49.500 51.500 49.500 48V42.500H16.500V48Q16.500 51.500 13 51.500H7.500Q4 51.500 4 48V40.500Q2 38 2 35V28Q2 24 4.500 21.500H3Q1.400 21.500 1 20L0.200 16Q0 14.500 1.500 14.500H9.500C12.500 5 17 0 26 0ZM25 8Q21.500 8 20 10.500Q18 14 16.500 19.500H49.500Q48 14 46 10.500Q44.500 8 41 8ZM12.500 26Q8 26.500 8 30.500Q8 35 13 34.800H16.500Q19 34.500 18.500 31.500Q16.500 26 12.500 26ZM53.500 26Q49.500 26 47.500 31.500Q47 34.500 49.500 34.800H53Q58 35 58 30.500Q58 26.500 53.500 26Z" />
  </svg>
);

const tabs = ["Interessante Orte", "Presseerklärung", "Wetter", "Veranstaltungen"];

export default function App() {
  return (
    <Screen>
      <GlobalStyle />
      <MapArea>
        <CityMap />
        <StatusBar>
          <StatusGroup $gap={0}>
            <Clock>12:07</Clock>
            <StatusGroup $gap={23}>
              <GearIcon />
              <ShieldIcon />
            </StatusGroup>
          </StatusGroup>
          <StatusGroup $gap={18}>
            <WifiIcon />
            <PlaneIcon />
            <BatteryIcon />
          </StatusGroup>
        </StatusBar>
      </MapArea>
      <Sheet>
        <Handle />
        <SearchField>
          <SearchIcon />
        </SearchField>
        <SectionTitle>Interessante Orte</SectionTitle>
        <Card>
          <CarIcon />
          <CardLabel>Spielplatz</CardLabel>
        </Card>
      </Sheet>
      <TabBar>
        {tabs.map((label) => (
          <Tab key={label}>
            <TabCircle />
            <TabLabel>{label}</TabLabel>
          </Tab>
        ))}
      </TabBar>
      <SystemBar>
        <SystemShape width="37" height="43" viewBox="0 0 37 44">
          <path d="M37 3V41Q37 45 33 43.500L1 24Q-1 22 1 20L33 0.500Q37 -1 37 3Z" />
        </SystemShape>
        <SystemShape $nudge={5} width="39" height="39" viewBox="0 0 39 39">
          <circle cx="19.500" cy="19.500" r="19.500" />
        </SystemShape>
        <SystemShape width="40" height="40" viewBox="0 0 40 40">
          <rect width="40" height="40" rx="3" />
        </SystemShape>
      </SystemBar>
    </Screen>
  );
}
